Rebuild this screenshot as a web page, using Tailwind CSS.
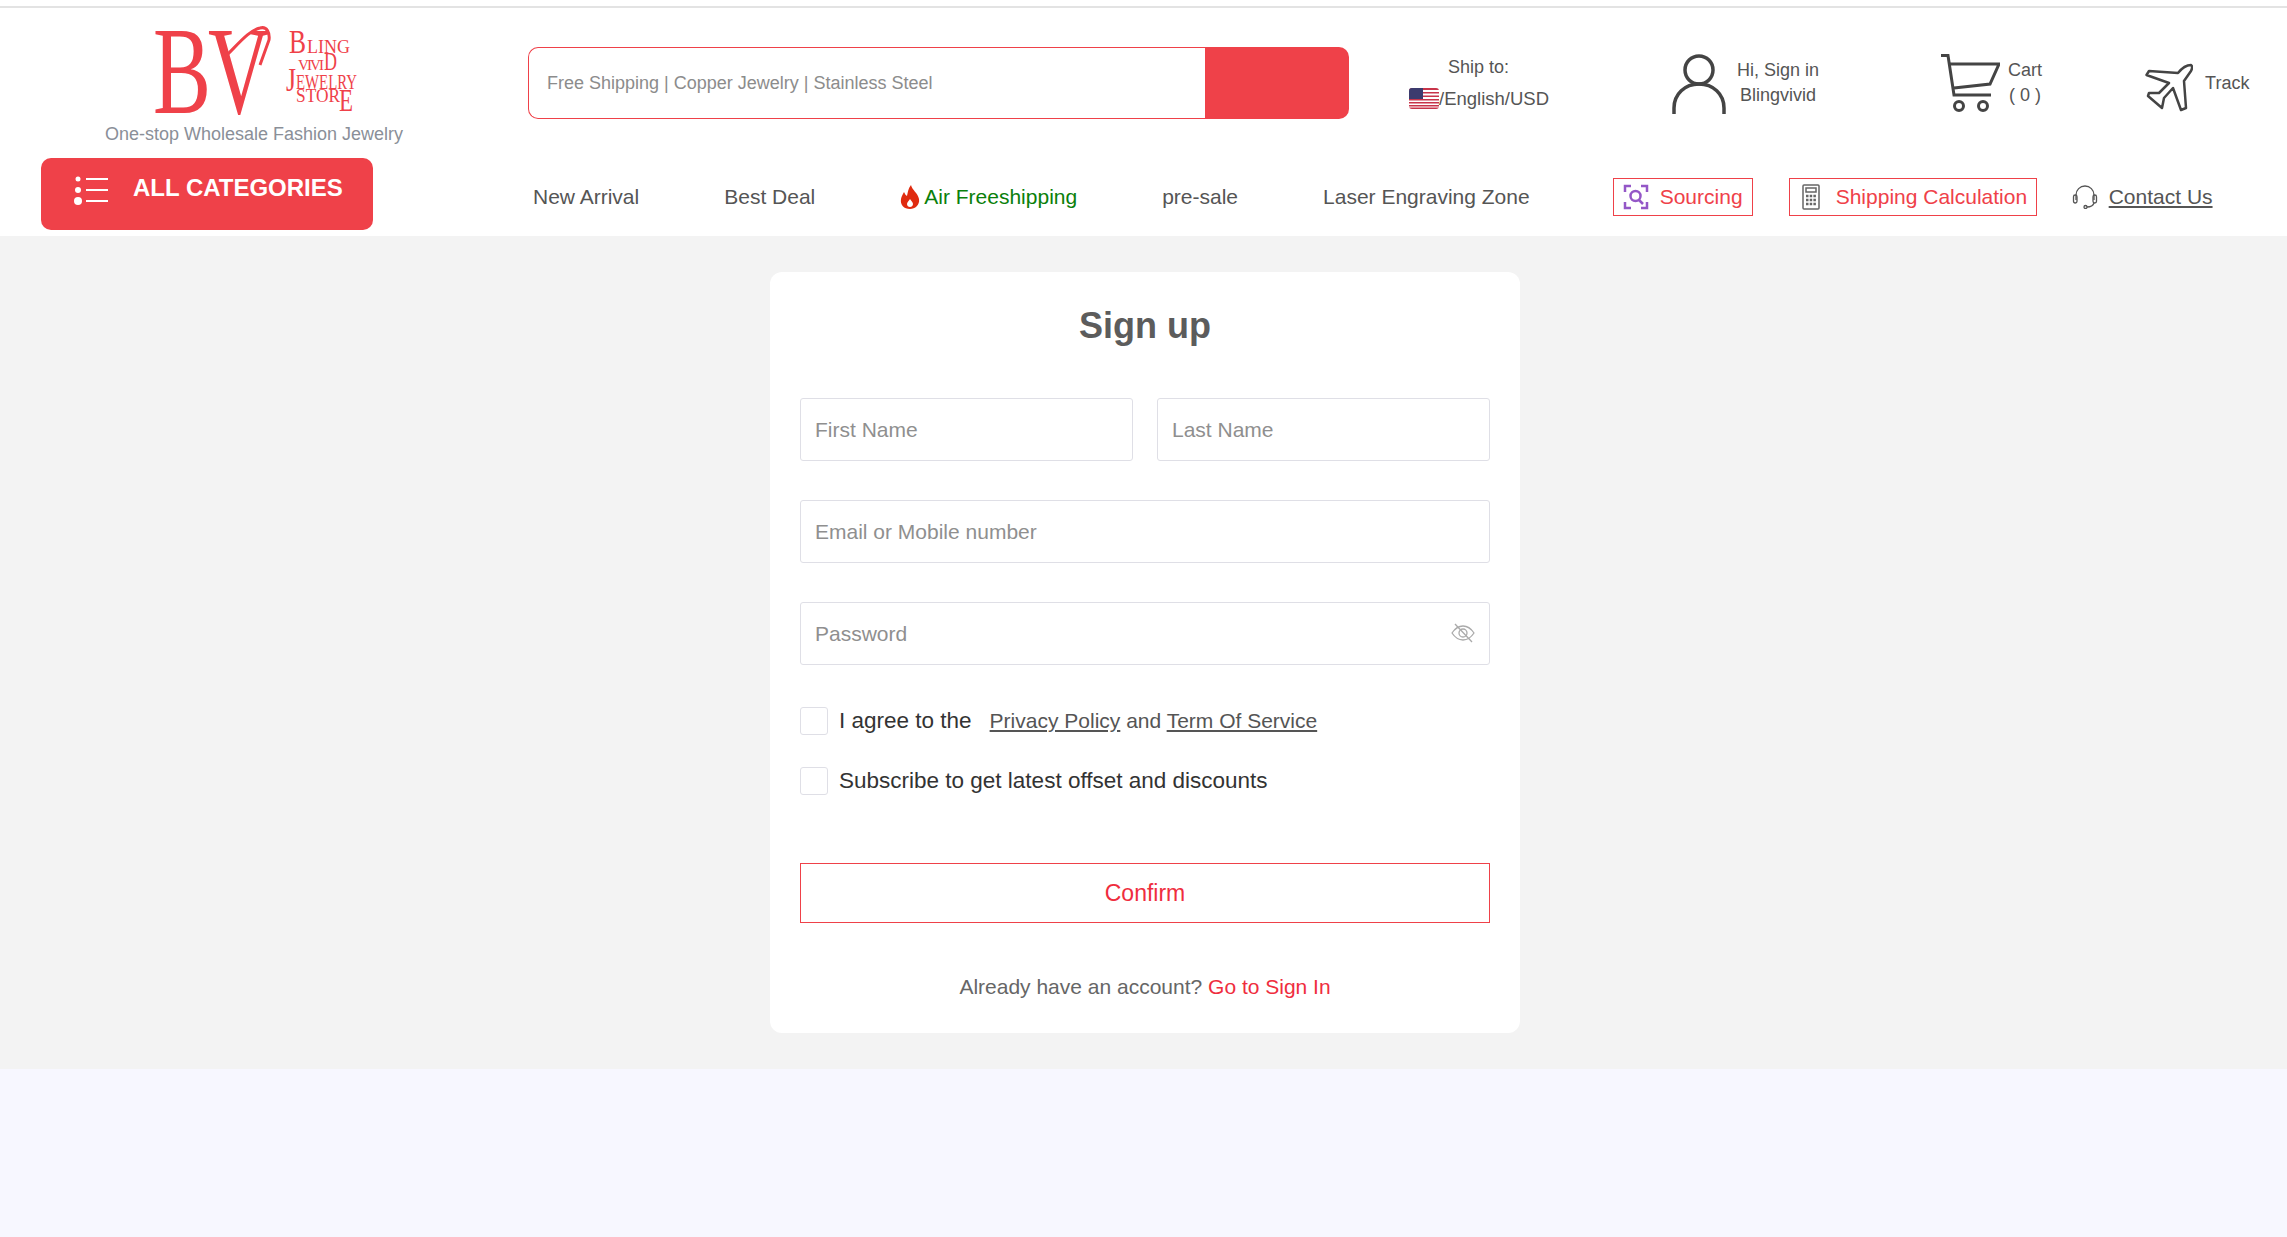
<!DOCTYPE html>
<html lang="en">
<head>
    <meta charset="UTF-8">
    <title>Sign up - Bling Vivid Jewelry Store</title>
    <script src="https://cdn.jsdelivr.net/npm/@tailwindcss/browser@4"></script>
</head>
<body class="bg-[#f7f7ff] font-['Liberation_Sans',Arial,sans-serif] min-h-[1237px]">

    <!-- Header -->
    <header class="bg-white h-[236px] pt-[6px]">
        <div class="h-[2px] bg-[#e3e3e3]"></div>

        <!-- Top row -->
        <div class="flex h-[150px]">
            <div class="w-[528px] shrink-0">
                <div class="w-[508px] flex flex-col items-center pt-[17px]">
                    <svg width="210" height="90" viewBox="0 0 210 90" class="ml-[6px] overflow-visible">
                        <g fill="#ef4149" font-family="Liberation Serif, serif">
                            <text x="1" y="88" font-size="124" textLength="58" lengthAdjust="spacingAndGlyphs">B</text>
                            <text x="56" y="88" font-size="124" textLength="62" lengthAdjust="spacingAndGlyphs">V</text>
                            <text x="137" y="28" font-size="33" textLength="17" lengthAdjust="spacingAndGlyphs">B</text>
                            <text x="155" y="28" font-size="18" textLength="43" lengthAdjust="spacing">LING</text>
                            <text x="146" y="45" font-size="15" textLength="26" lengthAdjust="spacing">VIVI</text>
                            <text x="172" y="45" font-size="25" textLength="13" lengthAdjust="spacingAndGlyphs">D</text>
                            <text x="134" y="66" font-size="34" textLength="10" lengthAdjust="spacingAndGlyphs">J</text>
                            <text x="144" y="64" font-size="21" textLength="61" lengthAdjust="spacingAndGlyphs">EWELRY</text>
                            <text x="144" y="77" font-size="18" textLength="44" lengthAdjust="spacingAndGlyphs">STOR</text>
                            <text x="187" y="86" font-size="31" textLength="14" lengthAdjust="spacingAndGlyphs">E</text>
                        </g>
                        <path d="M76 29C88 17 98 5 108 3C115 1 118 8 117 15L108 40" fill="none" stroke="#ef4149" stroke-width="3"/>
                    </svg>
                    <p class="text-[18px] leading-5 text-[#8a8f98] mt-[9px]">One-stop Wholesale Fashion Jewelry</p>
                </div>
            </div>

            <!-- Search -->
            <div class="flex w-[821px] h-[72px] mt-[39px] shrink-0">
                <div class="flex-1 border border-[#ef4149] border-r-0 rounded-l-[10px] flex items-center pl-[18px] text-[18px] text-[#8c8c8c]">Free Shipping | Copper Jewelry | Stainless Steel</div>
                <button class="w-[144px] bg-[#ef4149] rounded-r-[10px]"></button>
            </div>

            <!-- Ship to -->
            <div class="w-[163px] ml-[60px] shrink-0 pt-[49px] text-[18px] text-[#555]">
                <p class="leading-5 pl-[39px]">Ship to:</p>
                <div class="flex items-center mt-[11px]">
                    <svg width="30" height="21" viewBox="0 0 30 21" class="rounded-[3px]">
                        <rect width="30" height="21" fill="#fff"/>
                        <g fill="#c8344a">
                            <rect width="30" height="2"/><rect y="4" width="30" height="1.5"/><rect y="7.500" width="30" height="1.5"/><rect y="11" width="30" height="1.5"/><rect y="14" width="30" height="1.5"/><rect y="17" width="30" height="1.5"/><rect y="19.500" width="30" height="1.5"/>
                        </g>
                        <rect width="14" height="11" fill="#3c3b6e"/>
                    </svg>
                    <span class="leading-5 text-[18.500px]">/English/USD</span>
                </div>
            </div>

            <!-- Account -->
            <div class="flex ml-[100px] pt-[45px] shrink-0 text-[18px] text-[#555]">
                <svg width="54" height="62" viewBox="0 0 54 62" fill="none" stroke="#444" stroke-width="3.5">
                    <circle cx="27" cy="17" r="14"/>
                    <path d="M2 61V55C2 41 13 31 27 31C41 31 52 41 52 55V61"/>
                </svg>
                <div class="ml-[11px] pt-[5px] text-center leading-[25px]">
                    <p>Hi, Sign in</p>
                    <p>Blingvivid</p>
                </div>
            </div>

            <!-- Cart -->
            <div class="flex ml-[121px] pt-[46px] shrink-0 text-[18px] text-[#555]">
                <svg width="60" height="58" viewBox="0 0 60 58" fill="none" stroke="#444" stroke-width="3">
                    <path d="M1 1.500H8L14 41H51"/>
                    <path d="M9 10H59L50 30L14 34"/>
                    <circle cx="19" cy="52" r="4.500"/>
                    <circle cx="43" cy="52" r="4.500"/>
                </svg>
                <div class="ml-[8px] pt-[4px] text-center leading-[25px]">
                    <p>Cart</p>
                    <p>( 0 )</p>
                </div>
            </div>

            <!-- Track -->
            <div class="flex items-start ml-[103px] pt-[55px] shrink-0 text-[18px] text-[#555]">
                <svg width="48" height="49" viewBox="0 0 48 49" fill="none" stroke="#444" stroke-width="2.500" stroke-linejoin="round">
                    <path d="M46 2C41 2 37 5 33 10L4 8L1.500 12L24 20L14 30H4L3 33L17 45L19 35L28 25L36 47L41 45L39 18L46 8C47.500 5 47.500 3 46 2Z"/>
                </svg>
                <span class="ml-[12px] mt-[10px] leading-5">Track</span>
            </div>
        </div>

        <!-- Nav row -->
        <div class="flex items-start">
            <button class="w-[332px] h-[72px] ml-[41px] bg-[#ef4149] rounded-[10px] flex items-start pl-[32px] pt-[16px] text-white shrink-0">
                <svg width="36" height="30" viewBox="0 0 36 30" fill="white" class="mt-[1px]">
                    <circle cx="5" cy="4" r="2.500"/><circle cx="5" cy="15" r="3"/><circle cx="5" cy="26" r="4"/>
                    <rect x="13" y="3" width="22" height="2"/><rect x="13" y="14" width="22" height="2"/><rect x="13" y="25" width="22" height="2"/>
                </svg>
                <span class="ml-[24px] text-[24px] leading-7 font-bold">ALL CATEGORIES</span>
            </button>

            <nav class="flex items-center ml-[160px] h-[38px] mt-[20px] text-[21px] text-[#555]">
                <a href="#">New Arrival</a>
                <a href="#" class="ml-[85px]">Best Deal</a>
                <a href="#" class="ml-[85px] flex items-center text-[#0a800a]">
                    <svg width="20" height="24" viewBox="0 0 20 24" fill="#e02b10" class="mr-[4px]">
                        <path d="M11 0C12 5 18 8 19 14C20 20 15 24 10 24C4 24 0 20 1 14C1.500 11 3 9 4 7C5 9 5.500 10 7 11C8 7 8 4 11 0Z"/>
                        <path d="M10 14C11 16 13 17 13 19C13 21 11.500 22 10 22C8.500 22 7 21 7 19C7 17 9 16 10 14Z" fill="#fff"/>
                    </svg>
                    Air Freeshipping
                </a>
                <a href="#" class="ml-[85px]">pre-sale</a>
                <a href="#" class="ml-[85px]">Laser Engraving Zone</a>
                <a href="#" class="ml-[83px] h-[38px] w-[140px] border border-[#ef4149] flex items-center pl-[9px] text-[#ef4149] shrink-0">
                    <svg width="26" height="26" viewBox="0 0 26 26" fill="none" stroke="#9457c7" stroke-width="2.500">
                        <path d="M8 2H2V8M18 2H24V8M2 18V24H8M24 18V24H18"/>
                        <circle cx="12.500" cy="12" r="5"/>
                        <path d="M16 16L20 20"/>
                    </svg>
                    <span class="ml-[11px]">Sourcing</span>
                </a>
                <a href="#" class="ml-[36px] h-[38px] w-[248px] border border-[#ef4149] flex items-center pl-[12px] text-[#ef4149] shrink-0">
                    <svg width="18" height="26" viewBox="0 0 18 26" fill="none" stroke="#666" stroke-width="1.500">
                        <rect x="1" y="1" width="16" height="24" rx="1"/>
                        <rect x="4" y="4" width="10" height="4"/>
                        <path d="M4 12H14M4 16H14M4 20H14" stroke-width="2.500" stroke-dasharray="2.500 1.200"/>
                    </svg>
                    <span class="ml-[16px]">Shipping Calculation</span>
                </a>
                <a href="#" class="ml-[35px] flex items-center shrink-0">
                    <svg width="26" height="24" viewBox="0 0 26 24" fill="none" stroke="#555" stroke-width="1.300">
                        <path d="M4 15V10C4 5 8 1 13 1C18 1 22 5 22 10V15"/>
                        <rect x="1.500" y="10" width="3.500" height="8" rx="1.700"/>
                        <rect x="21" y="10" width="3.500" height="8" rx="1.700"/>
                        <path d="M22 18C21 21 18 22 15 22"/>
                        <circle cx="13.500" cy="22" r="1.500"/>
                    </svg>
                    <span class="ml-[11px] underline underline-offset-2">Contact Us</span>
                </a>
            </nav>
        </div>
    </header>

    <!-- Sign up -->
    <main class="bg-[#f3f3f3] h-[833px] pt-[36px]">
        <form class="w-[750px] h-[761px] ml-[770px] bg-white rounded-[12px] px-[30px] pt-[34px]">
            <h1 class="text-[36px] leading-10 font-bold text-[#5c5c5c] text-center">Sign up</h1>

            <div class="flex gap-[24px] mt-[52px]">
                <div class="flex-1 h-[63px] border border-[#dfdfe6] rounded-[3px] flex items-center pl-[14px] text-[21px] text-[#8f8f8f]">First Name</div>
                <div class="flex-1 h-[63px] border border-[#dfdfe6] rounded-[3px] flex items-center pl-[14px] text-[21px] text-[#8f8f8f]">Last Name</div>
            </div>
            <div class="h-[63px] mt-[39px] border border-[#dfdfe6] rounded-[3px] flex items-center pl-[14px] text-[21px] text-[#8f8f8f]">Email or Mobile number</div>
            <div class="h-[63px] mt-[39px] border border-[#dfdfe6] rounded-[3px] flex items-center justify-between pl-[14px] pr-[14px] text-[21px] text-[#8f8f8f]">
                <span>Password</span>
                <svg width="24" height="22" viewBox="0 0 24 22" fill="none" stroke="#aaa" stroke-width="1.300" class="mb-[2px]">
                    <path d="M1 11C5 5 9 4 12 4C15 4 19 5 23 11C19 17 15 18 12 18C9 18 5 17 1 11Z"/>
                    <circle cx="12" cy="11" r="4"/>
                    <path d="M4 2L21 20"/>
                </svg>
            </div>

            <label class="flex items-center mt-[42px] h-[28px]">
                <span class="w-[28px] h-[28px] border border-[#dfdfe6] rounded-[3px] shrink-0"></span>
                <span class="ml-[11px] text-[22.500px] text-[#333]">I agree to the</span>
                <span class="ml-[18px] text-[21px] text-[#555]"><a href="#" class="underline underline-offset-2">Privacy Policy</a> and <a href="#" class="underline underline-offset-2">Term Of Service</a></span>
            </label>
            <label class="flex items-center mt-[32px] h-[28px]">
                <span class="w-[28px] h-[28px] border border-[#dfdfe6] rounded-[3px] shrink-0"></span>
                <span class="ml-[11px] text-[22.500px] text-[#333]">Subscribe to get latest offset and discounts</span>
            </label>

            <button type="button" class="block w-full h-[60px] mt-[68px] border border-[#ef4149] text-[23px] text-[#ef2d3e]">Confirm</button>

            <p class="mt-[52px] text-center text-[21px] leading-6 text-[#666]">Already have an account? <a href="#" class="text-[#ef2d3e]">Go to Sign In</a></p>
        </form>
    </main>

</body>
</html>
